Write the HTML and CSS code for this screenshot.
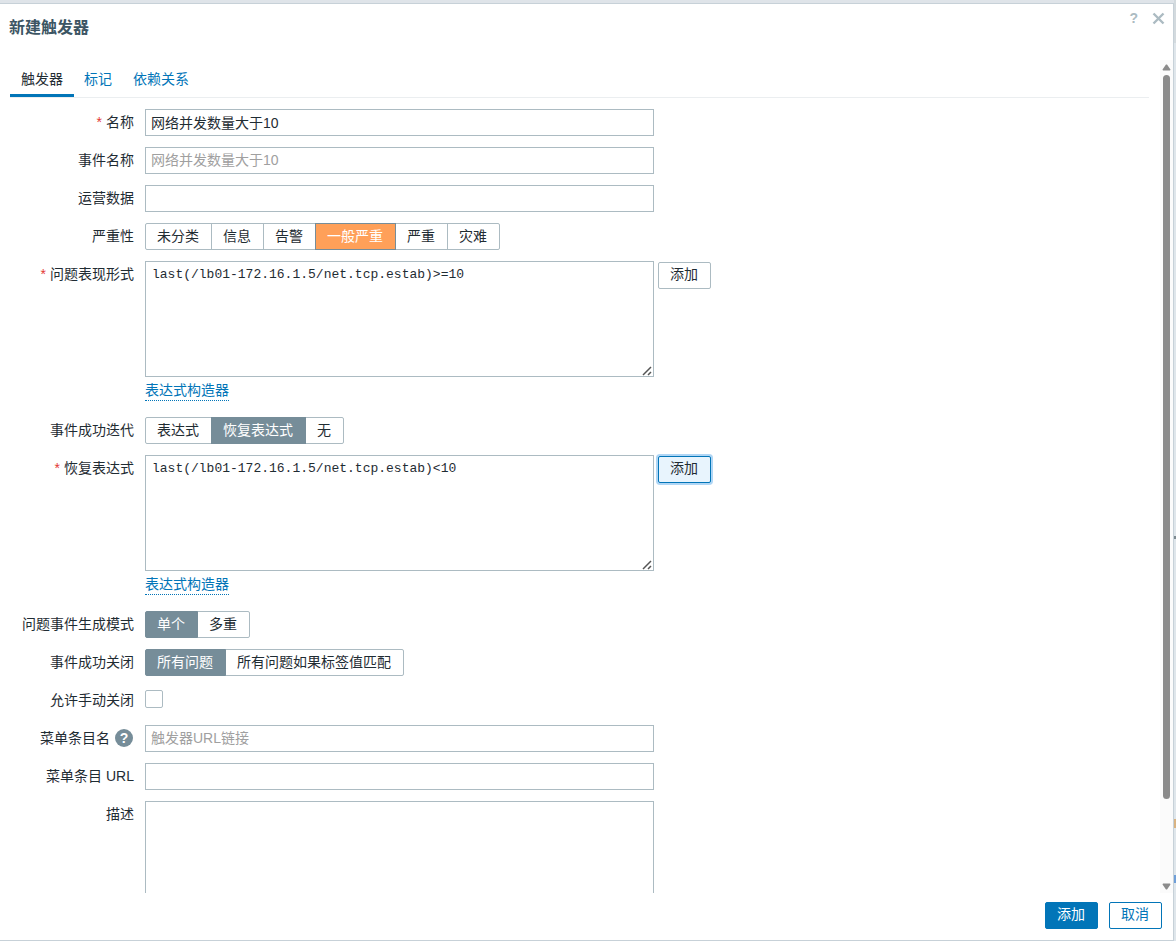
FILE: index.html
```
<!DOCTYPE html>
<html lang="zh-CN">
<head>
  <meta charset="UTF-8">
  <title>新建触发器</title>
  <link rel="stylesheet" href="styles.css">
</head>
<body>
  <!-- bits of the dimmed page that peek out beside the dialogue -->
  <div class="page-behind" aria-hidden="true">
    <i class="peek peek-grey"></i>
    <i class="peek peek-orange"></i>
    <i class="peek peek-blue"></i>
  </div>

  <div class="overlay-dialogue" role="dialog" aria-labelledby="dialogue-title">
    <header class="dialogue-header">
      <h4 id="dialogue-title">新建触发器</h4>
      <div class="dialogue-controls">
        <a class="btn-help" href="#" aria-label="帮助">?</a>
        <button class="btn-close" type="button" aria-label="关闭">
          <svg width="13" height="13" viewBox="0 0 13 13"><path d="M1.5 1.5l10 10M11.5 1.5l-10 10" stroke="#acbbc2" stroke-width="2.4" fill="none"/></svg>
        </button>
      </div>
    </header>

    <div class="dialogue-body">
      <form class="dialogue-scroll" id="trigger-form">
        <nav class="tabs-nav">
          <a class="tab active" href="#trigger">触发器</a>
          <a class="tab" href="#tags">标记</a>
          <a class="tab" href="#deps">依赖关系</a>
        </nav>

        <div class="form-grid">
          <label class="required" for="name">名称</label>
          <div class="field"><input class="text" id="name" type="text" value="网络并发数量大于10"></div>

          <label for="event-name">事件名称</label>
          <div class="field"><input class="text" id="event-name" type="text" placeholder="网络并发数量大于10"></div>

          <label for="opdata">运营数据</label>
          <div class="field"><input class="text" id="opdata" type="text"></div>

          <span class="label" id="severity-label">严重性</span>
          <div class="field">
            <div class="segmented severity" role="radiogroup" aria-labelledby="severity-label">
              <label><input type="radio" name="severity">未分类</label>
              <label><input type="radio" name="severity">信息</label>
              <label><input type="radio" name="severity">告警</label>
              <label><input type="radio" name="severity" checked>一般严重</label>
              <label><input type="radio" name="severity">严重</label>
              <label><input type="radio" name="severity">灾难</label>
            </div>
          </div>

          <label class="required" for="expression">问题表现形式</label>
          <div class="field">
            <div class="expression">
              <div class="textarea-wrap">
                <textarea id="expression" spellcheck="false">last(/lb01-172.16.1.5/net.tcp.estab)&gt;=10</textarea>
                <svg class="grip" width="10" height="10" viewBox="0 0 10 10"><path d="M1 9l8-8M6 9l3-3" stroke="#555" stroke-width="1.5" fill="none"/></svg>
              </div>
              <button class="btn" type="button">添加</button>
            </div>
            <a class="link-action" href="#">表达式构造器</a>
          </div>

          <span class="label" id="recovery-label">事件成功迭代</span>
          <div class="field">
            <div class="segmented" role="radiogroup" aria-labelledby="recovery-label">
              <label><input type="radio" name="recovery">表达式</label>
              <label><input type="radio" name="recovery" checked>恢复表达式</label>
              <label><input type="radio" name="recovery">无</label>
            </div>
          </div>

          <label class="required" for="recovery-expression">恢复表达式</label>
          <div class="field">
            <div class="expression">
              <div class="textarea-wrap">
                <textarea id="recovery-expression" spellcheck="false">last(/lb01-172.16.1.5/net.tcp.estab)&lt;10</textarea>
                <svg class="grip" width="10" height="10" viewBox="0 0 10 10"><path d="M1 9l8-8M6 9l3-3" stroke="#555" stroke-width="1.5" fill="none"/></svg>
              </div>
              <button class="btn focused" type="button">添加</button>
            </div>
            <a class="link-action" href="#">表达式构造器</a>
          </div>

          <span class="label" id="mode-label">问题事件生成模式</span>
          <div class="field">
            <div class="segmented" role="radiogroup" aria-labelledby="mode-label">
              <label><input type="radio" name="mode" checked>单个</label>
              <label><input type="radio" name="mode">多重</label>
            </div>
          </div>

          <span class="label" id="close-label">事件成功关闭</span>
          <div class="field">
            <div class="segmented" role="radiogroup" aria-labelledby="close-label">
              <label><input type="radio" name="close" checked>所有问题</label>
              <label><input type="radio" name="close">所有问题如果标签值匹配</label>
            </div>
          </div>

          <label for="manual-close">允许手动关闭</label>
          <div class="field field-check"><input class="checkbox" id="manual-close" type="checkbox"></div>

          <div class="label-help">
            <label for="url-name">菜单条目名</label>
            <button class="hint" type="button" aria-label="提示">?</button>
          </div>
          <div class="field"><input class="text" id="url-name" type="text" placeholder="触发器URL链接"></div>

          <label for="url">菜单条目 URL</label>
          <div class="field"><input class="text" id="url" type="text"></div>

          <label for="description">描述</label>
          <div class="field"><textarea class="description" id="description"></textarea></div>
        </div>
      </form>

      <div class="scrollbar" aria-hidden="true">
        <svg width="9" height="7" viewBox="0 0 9 7"><path d="M4 .5h1L8.5 5.5 8 6.5H1L.5 5.5z" fill="#8b8b8b"/></svg>
        <div class="track"><div class="thumb"></div></div>
        <svg width="9" height="7" viewBox="0 0 9 7"><path d="M4 6.5h1L8.5 1.5 8 .5H1L.5 1.5z" fill="#8b8b8b"/></svg>
      </div>
    </div>

    <footer class="dialogue-footer">
      <button class="btn btn-primary" type="submit" form="trigger-form">添加</button>
      <button class="btn btn-alt" type="button">取消</button>
    </footer>
  </div>
</body>
</html>
```

FILE: styles.css
```
* {
  box-sizing: border-box;
}
body {
  margin: 0;
  height: 100vh;
  padding: 3px 2px 0 0;
  background: #dfe4e9;
  color: #1f2c33;
  font-family: "Liberation Sans", "Noto Sans CJK SC", sans-serif;
  font-size: 14px;
  line-height: 20px;
  overflow: hidden;
}
input,
button,
textarea {
  font: inherit;
  color: inherit;
}
a {
  color: #0275b8;
  text-decoration: none;
}

/* page under the overlay */
.page-behind {
  position: absolute;
  top: 0;
  right: 0;
  bottom: 0;
  width: 2px;
  background: linear-gradient(#d3dade 43px, #dfe6eb 43px);
}
.peek {
  position: absolute;
  right: 0;
  width: 2px;
}
.peek-grey {
  top: 57%;
  height: 3px;
  background: #7d8a90;
}
.peek-orange {
  top: 87%;
  height: 9px;
  background: #d9b382;
}
.peek-blue {
  top: 93%;
  height: 8px;
  background: #6f9fd8;
}

.overlay-dialogue {
  position: relative;
  height: 100%;
  display: flex;
  flex-direction: column;
  background: #fff;
  border: 1px solid #c7d1d8;
  border-left: 0;
}

/* header */
.dialogue-header {
  height: 56px;
  flex: none;
  display: flex;
  justify-content: space-between;
  align-items: flex-start;
  padding: 4px 8px 0 9px;
}
.dialogue-header h4 {
  margin: 10px 0 0;
  font-size: 16px;
  line-height: 20px;
  font-weight: bold;
  color: #3c5563;
}
.dialogue-controls {
  display: flex;
  align-items: center;
  gap: 14px;
}
.btn-help {
  color: #acbbc2;
  font-size: 14px;
  font-weight: bold;
}
.btn-close {
  display: flex;
  padding: 0;
  border: 0;
  background: none;
  cursor: pointer;
}

/* scrolling area */
.dialogue-body {
  flex: 1;
  min-height: 0;
  display: flex;
}
.dialogue-scroll {
  flex: 1;
  padding: 4px 11px 0 10px;
  overflow-y: auto;
  scrollbar-width: none;
}
.scrollbar {
  width: 13px;
  display: flex;
  flex-direction: column;
  align-items: center;
  gap: 4px;
  padding: 4px 0 3px;
  background: #fbfbfb;
}
.track {
  flex: 1;
}
.thumb {
  width: 7px;
  height: 90%;
  border-radius: 4px;
  background: #8b8b8b;
}

/* tabs */
.tabs-nav {
  display: flex;
  border-bottom: 1px solid #ebeef0;
}
.tab {
  padding: 5px 11px 8px;
}
.tab + .tab {
  padding-left: 10px;
}
.tab.active {
  padding-bottom: 5px;
  border-bottom: 3px solid #0275b8;
  color: #1f2c33;
}

/* form */
.form-grid {
  display: grid;
  grid-template-columns: 124px 1fr;
  column-gap: 11px;
  row-gap: 11px;
  padding-top: 11px;
}
.form-grid > label,
.form-grid > .label,
.label-help {
  padding-top: 3px;
  text-align: right;
}
.required::before {
  content: "*";
  margin-right: 4px;
  color: #e33734;
}
.label-help {
  display: flex;
  justify-content: flex-end;
  gap: 5px;
}
.hint {
  width: 18px;
  height: 18px;
  margin: 1px 1px 0 0;
  padding: 0;
  border: 0;
  border-radius: 50%;
  background: #768d99;
  color: #fff;
  font-size: 14px;
  font-weight: bold;
  line-height: 18px;
}
.text,
textarea {
  display: block;
  width: 509px;
  max-width: 100%;
  border: 1px solid #acbbc2;
  border-radius: 0;
  background: #fff;
}
.text {
  height: 27px;
  padding: 0 5px 2px;
}
.text::placeholder {
  color: #a0a0a0;
}
textarea {
  height: 116px;
  padding: 3px 6px;
  font-family: "Liberation Mono", "Noto Sans CJK SC", monospace;
  font-size: 13px;
  resize: none;
}
.description {
  height: 130px;
}
.expression {
  display: flex;
  align-items: flex-start;
  gap: 4px;
}
.textarea-wrap {
  position: relative;
}
.grip {
  position: absolute;
  right: 2px;
  bottom: 1px;
  pointer-events: none;
}
.expression .btn {
  margin-top: 1px;
}
.link-action {
  display: inline-block;
  margin: 4px 0 5px;
  line-height: 19px;
  border-bottom: 1px dotted #0275b8;
}

/* segmented radios */
.segmented {
  display: inline-flex;
  vertical-align: top;
}
.segmented label {
  position: relative;
  height: 27px;
  margin-left: -1px;
  padding: 1px 12px 0 11px;
  border: 1px solid #acbbc2;
  line-height: 22px;
  cursor: pointer;
}
.segmented label:first-child {
  margin-left: 0;
  border-radius: 2px 0 0 2px;
}
.segmented label:last-child {
  border-radius: 0 2px 2px 0;
}
.segmented input {
  position: absolute;
  margin: 0;
  opacity: 0;
}
.segmented label:has(input:checked) {
  z-index: 1;
  border-color: #768d99;
  background: #768d99;
  color: #fff;
}
.severity label:has(input:checked) {
  background: #ffa059;
}
.field-check {
  height: 27px;
  padding-top: 3px;
}
.checkbox {
  appearance: none;
  display: block;
  width: 18px;
  height: 18px;
  margin: 0;
  border: 1px solid #acbbc2;
  border-radius: 2px;
  background: #fff;
}

/* buttons */
.btn {
  height: 27px;
  padding: 0 12px 3px 11px;
  border: 1px solid #acbbc2;
  border-radius: 2px;
  background: #fff;
  line-height: 20px;
  cursor: pointer;
}
.btn.focused {
  border-color: #0275b8;
  background: #e8f4fd;
  box-shadow: 0 0 0 2px #b0d6f5;
}
.btn-primary {
  border-color: #0275b8;
  background: #0275b8;
  color: #fff;
}
.btn-alt {
  border-color: #0275b8;
  color: #0275b8;
}
.dialogue-footer {
  height: 47px;
  flex: none;
  display: flex;
  justify-content: flex-end;
  align-items: flex-start;
  gap: 11px;
  padding: 9px 11px 0;
}
```
